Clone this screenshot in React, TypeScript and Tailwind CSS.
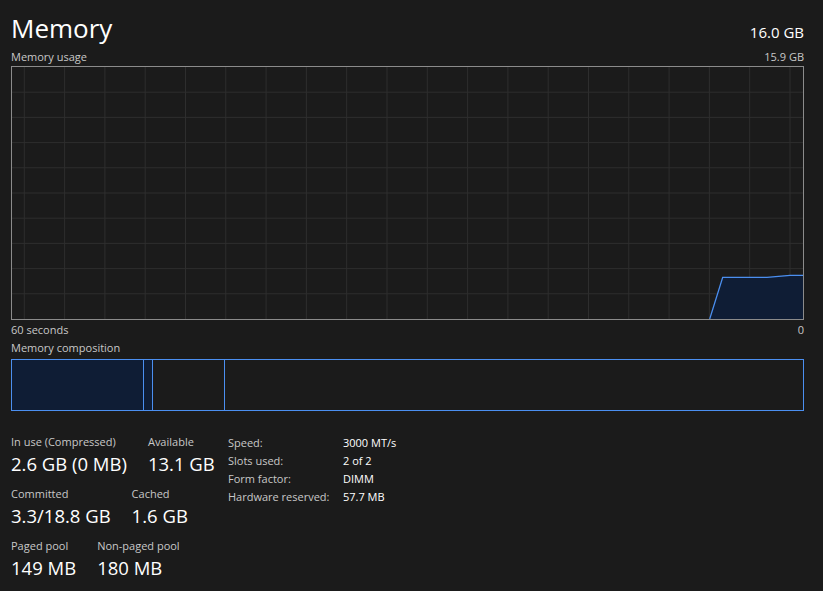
import React from 'react';

const VLINES = Array.from({ length: 20 }, (_, i) => 12.3 + i * 40.3);
const HLINES = Array.from({ length: 9 }, (_, i) => 25.2 * (i + 1));

const usage = '697.7,252 710.7,210.3 755,210.3 778,208.3 791,208.3 791,252';
const usageLine = '697.7,252 710.7,210.3 755,210.3 778,208.3 791,208.3';

const stats = [
  [
    { label: 'In use (Compressed)', value: '2.6 GB (0 MB)' },
    { label: 'Available', value: '13.1 GB' },
  ],
  [
    { label: 'Committed', value: '3.3/18.8 GB' },
    { label: 'Cached', value: '1.6 GB' },
  ],
  [
    { label: 'Paged pool', value: '149 MB' },
    { label: 'Non-paged pool', value: '180 MB' },
  ],
];

const details = [
  ['Speed:', '3000 MT/s'],
  ['Slots used:', '2 of 2'],
  ['Form factor:', 'DIMM'],
  ['Hardware reserved:', '57.7 MB'],
];

const UsageChart: React.FC = () => (
  <div className="h-[254px] border border-[#8b8b8b]">
    <svg width="791" height="252" className="block">
      {VLINES.map((x) => (
        <line key={x} x1={x} y1={0} x2={x} y2={252} stroke="#2e2e2e" strokeWidth={1} />
      ))}
      {HLINES.map((y) => (
        <line key={y} x1={0} y1={y} x2={791} y2={y} stroke="#2e2e2e" strokeWidth={1} />
      ))}
      <polygon points={usage} fill="#0f1d35" />
      <polyline points={usageLine} fill="none" stroke="#4b8ff0" strokeWidth={1.3} />
    </svg>
  </div>
);

export default function App() {
  return (
    <div
      className="w-[823px] h-[591px] bg-[#1b1b1b] text-white px-[11px] pt-[10px] overflow-hidden"
      style={{ fontFamily: '"Open Sans", "Noto Sans", sans-serif' }}
    >
      <div className="w-[793px]">
        {/* header */}
        <div className="flex items-end justify-between">
          <h1 className="text-[26px] leading-[36px] font-normal">Memory</h1>
          <span className="text-[15px] leading-[22px] mb-[3px]">16.0 GB</span>
        </div>
        <div className="flex justify-between text-[11px] leading-[15px] text-[#c8c8c8] mt-[3px]">
          <span>Memory usage</span>
          <span>15.9 GB</span>
        </div>

        <div className="mt-[2px]">
          <UsageChart />
        </div>

        <div className="flex justify-between text-[11px] leading-[15px] text-[#c8c8c8] mt-[2px]">
          <span>60 seconds</span>
          <span>0</span>
        </div>
        <div className="text-[11px] leading-[15px] text-[#c8c8c8] mt-[3px]">Memory composition</div>

        {/* composition bar */}
        <div className="mt-[4px] h-[52px] flex border border-[#4b8ff0]">
          <div className="w-[132px] bg-[#0f1d35] border-r border-[#4b8ff0]" />
          <div className="w-[9px] bg-[#0f1d35] border-r border-[#4b8ff0]" />
          <div className="w-[72px] border-r border-[#4b8ff0]" />
          <div className="flex-1" />
        </div>
      </div>

      {/* stats */}
      <div className="flex mt-[23px]">
        <div className="w-[217px] flex flex-col gap-[8px]">
          {stats.map((row, i) => (
            <div key={i} className="flex gap-[21px]">
              {row.map((s) => (
                <div key={s.label} className="flex flex-col">
                  <span className="text-[11px] leading-[16px] text-[#c8c8c8]">{s.label}</span>
                  <span className="text-[18.5px] leading-[28px] whitespace-nowrap">{s.value}</span>
                </div>
              ))}
            </div>
          ))}
        </div>
        <div className="flex flex-col">
          {details.map(([k, v]) => (
            <div key={k} className="flex text-[11px] leading-[18px]">
              <span className="w-[115px] text-[#c8c8c8]">{k}</span>
              <span>{v}</span>
            </div>
          ))}
        </div>
      </div>
    </div>
  );
}
